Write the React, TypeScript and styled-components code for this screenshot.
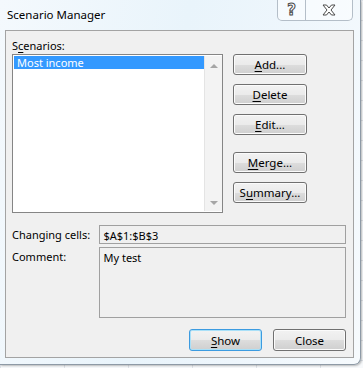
import React from 'react';
import styled, { createGlobalStyle } from 'styled-components';

const GlobalStyle = createGlobalStyle`
  html, body {
    margin: 0;
    padding: 0;
  }
  body {
    width: 363px;
    height: 368px;
    overflow: hidden;
    background-color: #f7f9fb;
    background-image:
      linear-gradient(to right, #dfe3e8 1px, transparent 1px),
      linear-gradient(to bottom, #dfe3e8 1px, transparent 1px);
    background-size: 64px 20px;
    font-family: 'Noto Sans', 'Open Sans', sans-serif;
    font-size: 11px;
    color: #000;
  }
`;

const Frame = styled.div`
  width: 361px;
  height: 365px;
  box-sizing: border-box;
  background: linear-gradient(100deg, #f4f9fd 0%, #e9f4fb 45%, #eef6fc 70%, #f6fafd 100%);
  border-right: 1px solid #8e9aa6;
  border-bottom: 1px solid #8e9aa6;
  border-bottom-right-radius: 7px;
  box-shadow: 1px 1px 2px rgba(0, 0, 0, 0.25);
  display: flex;
  flex-direction: column;
`;

const TitleBar = styled.div`
  height: 30px;
  display: flex;
  align-items: flex-start;
  justify-content: space-between;
`;

const Title = styled.span`
  padding: 7px 0 0 7px;
  font-size: 11.5px;
  line-height: 16px;
`;

const CaptionButtons = styled.div`
  display: flex;
  margin-right: 7px;
  border: 1px solid #b4bec8;
  border-top: none;
  border-radius: 0 0 5px 5px;
  background: rgba(255, 255, 255, 0.5);
  height: 20px;
`;

const CaptionButton = styled.div<{ $w: number }>`
  width: ${(p) => p.$w}px;
  display: flex;
  align-items: center;
  justify-content: center;
  & + & {
    border-left: 1px solid #b4bec8;
  }
`;

const HelpGlyph = styled.span`
  font-family: 'DejaVu Sans', sans-serif;
  font-weight: bold;
  font-size: 15px;
  line-height: 18px;
  color: #fff;
  -webkit-text-stroke: 1px #4a4a4a;
`;

const Panel = styled.div`
  margin: 0 6px 0 5px;
  height: 328px;
  box-sizing: border-box;
  border: 1px solid #a3a3a3;
  background: #f0f0f0;
  padding: 9px 7px 0 6px;
  display: flex;
  flex-direction: column;
`;

const TopRow = styled.div`
  display: flex;
  gap: 10px;
`;

const LeftColumn = styled.div`
  display: flex;
  flex-direction: column;
`;

const Label = styled.div`
  height: 14px;
  line-height: 12px;
`;

const ListBox = styled.div`
  width: 211px;
  height: 159px;
  box-sizing: border-box;
  border: 1px solid #858585;
  background: #fff;
  display: flex;
  padding: 1px 0 1px 1px;
`;

const Items = styled.div`
  flex: 1;
`;

const Item = styled.div<{ $selected?: boolean }>`
  height: 13px;
  line-height: 13px;
  padding-left: 3px;
  background: ${(p) => (p.$selected ? '#3399ff' : 'transparent')};
  color: ${(p) => (p.$selected ? '#fff' : '#000')};
`;

const ScrollBar = styled.div`
  width: 17px;
  background: #f3f3f3;
  border-left: 1px solid #e4e4e4;
  display: flex;
  flex-direction: column;
  justify-content: space-between;
  align-items: center;
  padding: 8px 0 6px;
`;

const Arrow = styled.div<{ $down?: boolean }>`
  width: 0;
  height: 0;
  border-left: 4px solid transparent;
  border-right: 4px solid transparent;
  ${(p) => (p.$down ? 'border-top: 4px solid #a6a6a6;' : 'border-bottom: 4px solid #a6a6a6;')}
`;

const ButtonColumn = styled.div`
  display: flex;
  flex-direction: column;
  padding-top: 14px;
`;

const Button = styled.button<{ $gap?: number; $default?: boolean; $w?: number; $h?: number }>`
  width: ${(p) => p.$w ?? 74}px;
  height: ${(p) => p.$h ?? 21}px;
  margin-top: ${(p) => p.$gap ?? 0}px;
  padding: 0;
  font-family: inherit;
  font-size: 11.5px;
  color: #000;
  border-radius: 3px;
  border: 1px solid ${(p) => (p.$default ? '#3c9be0' : '#707070')};
  background: linear-gradient(#f2f2f2 0%, #ebebeb 50%, #dddddd 51%, #cfcfcf 100%);
  box-shadow: ${(p) => (p.$default ? 'inset 0 0 0 1px #a9e0f8' : 'inset 0 0 0 1px #fbfbfb')};
  line-height: 17px;
`;

const Key = styled.span`
  text-decoration: underline;
  text-underline-offset: 2px;
`;

const FieldRow = styled.div<{ $top: number }>`
  display: flex;
  margin-top: ${(p) => p.$top}px;
`;

const FieldLabel = styled.div`
  width: 88px;
  line-height: 19px;
`;

const Field = styled.div<{ $h: number }>`
  width: 248px;
  height: ${(p) => p.$h}px;
  box-sizing: border-box;
  border: 1px solid #a0a0a0;
  background: #f0f0f0;
  padding: 1px 3px 0;
  line-height: 17px;
`;

const Footer = styled.div`
  display: flex;
  justify-content: flex-end;
  gap: 11px;
  margin-top: 11px;
`;

const CloseGlyph = () => (
  <svg width="14" height="12" viewBox="0 0 14 12">
    <polygon
      points="1,1 4.5,1 7,4 9.5,1 13,1 9,6 13,11 9.5,11 7,8 4.5,11 1,11 5,6"
      fill="#fff"
      stroke="#4a4a4a"
      strokeWidth="1"
      strokeLinejoin="round"
    />
  </svg>
);

export default function App() {
  return (
    <>
      <GlobalStyle />
      <Frame>
        <TitleBar>
          <Title>Scenario Manager</Title>
          <CaptionButtons>
            <CaptionButton $w={27}>
              <HelpGlyph>?</HelpGlyph>
            </CaptionButton>
            <CaptionButton $w={46}>
              <CloseGlyph />
            </CaptionButton>
          </CaptionButtons>
        </TitleBar>
        <Panel>
          <TopRow>
            <LeftColumn>
              <Label>
                S<Key>c</Key>enarios:
              </Label>
              <ListBox>
                <Items>
                  <Item $selected>Most income</Item>
                </Items>
                <ScrollBar>
                  <Arrow />
                  <Arrow $down />
                </ScrollBar>
              </ListBox>
            </LeftColumn>
            <ButtonColumn>
              <Button>
                <Key>A</Key>dd...
              </Button>
              <Button $gap={9}>
                <Key>D</Key>elete
              </Button>
              <Button $gap={9}>
                <Key>E</Key>dit...
              </Button>
              <Button $gap={17}>
                <Key>M</Key>erge...
              </Button>
              <Button $gap={9}>
                S<Key>u</Key>mmary...
              </Button>
            </ButtonColumn>
          </TopRow>
          <FieldRow $top={12}>
            <FieldLabel>Changing cells:</FieldLabel>
            <Field $h={19}>$A$1:$B$3</Field>
          </FieldRow>
          <FieldRow $top={3}>
            <FieldLabel>Comment:</FieldLabel>
            <Field $h={71}>My test</Field>
          </FieldRow>
          <Footer>
            <Button $default $w={73} $h={22}>
              <Key>S</Key>how
            </Button>
            <Button $w={73} $h={22}>
              Close
            </Button>
          </Footer>
        </Panel>
      </Frame>
    </>
  );
}
